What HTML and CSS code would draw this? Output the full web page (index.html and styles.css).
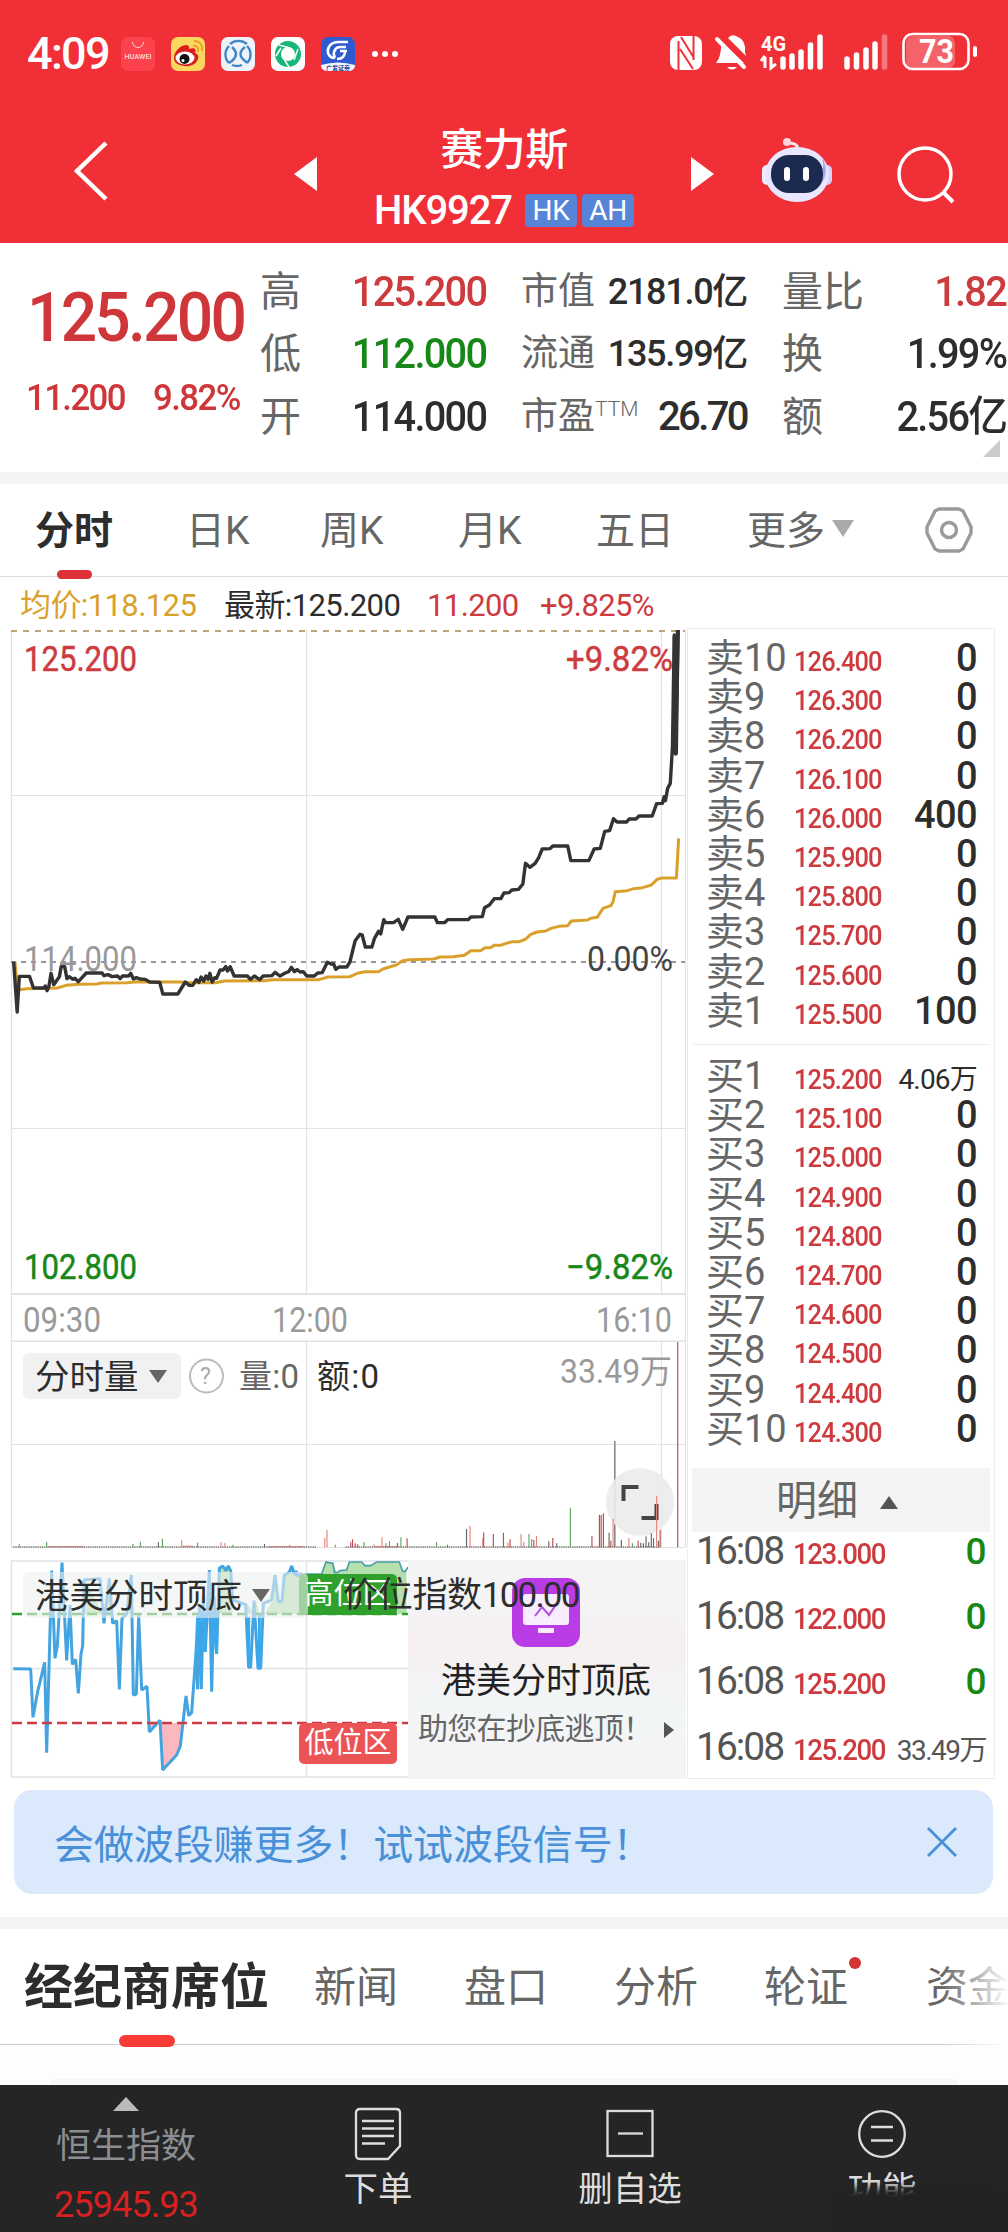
FILE: index.html
```html
<!DOCTYPE html>
<html lang="zh-CN">
<head>
<meta charset="utf-8">
<title>赛力斯 HK9927</title>
<link rel="stylesheet" href="styles.css">
</head>
<body>
<header class="top">
  <div class="status">
    <span class="clock">4:09</span>
    <div class="apps">
      <svg viewBox="0 0 34 34"><rect width="34" height="34" rx="7" fill="#fc424c"/><path d="M11.500 5a5.500 5.500 0 0 0 11 0" fill="none" stroke="#ffd0d0" stroke-width="1"/><text x="17" y="22" font-size="7" textLength="27" text-anchor="middle" fill="#fff" font-family="Roboto">HUAWEI</text></svg>
      <svg viewBox="0 0 34 34"><rect width="34" height="34" rx="7" fill="#fbd75f"/><path d="M3 21C3 14 10 8 15 8c4 0 3 3 3 4 5-2 8 0 6 4 3 1 4 3 3 6-2 6-9 8-14 7C7 28 3 26 3 21Z" fill="#d81f1e"/><ellipse cx="14" cy="21" rx="9.500" ry="6.500" fill="#fff"/><circle cx="13.500" cy="22" r="5" fill="#111"/><circle cx="12" cy="23.500" r="1.500" fill="#fff"/><path d="M22 9c4-1 6 2 5 6M23 4c6 0 9 4 8 10" fill="none" stroke="#eda02a" stroke-width="2"/></svg>
      <svg viewBox="0 0 34 34"><rect width="34" height="34" rx="7" fill="#eef3fa"/><path d="M9 7a13 13 0 0 1 17 0M8 26A12 12 0 0 1 8 9M11 10q8 7 0 14l-3 2M26 26a12 12 0 0 0 0-17M24 10q-9 7 0 14l2 2M11 28a13 13 0 0 0 10 0" fill="none" stroke="#3f86c4" stroke-width="2.400"/></svg>
      <svg viewBox="0 0 34 34"><rect width="34" height="34" rx="7" fill="#fff"/><circle cx="17" cy="17" r="10" fill="none" stroke="#16b778" stroke-width="6"/><path d="M8 8l11 3M27 12l-4 11M18 30l-7-11M5 19l5-8" stroke="#fff" stroke-width="1.500"/></svg>
      <svg viewBox="0 0 34 34"><rect width="34" height="34" rx="7" fill="#2f5bd0"/><path d="M27 5h-9C9 5 6 11 7 16c1 3 4 5 7 5M25 10h-6c-5 0-8 6-5 11M26 14h-7M24 14c0 6-3 8-8 8" fill="none" stroke="#fff" stroke-width="2.500"/><path d="M0 28q17-5 34 0c0 4-3 6-7 6H7c-4 0-7-2-7-6Z" fill="#f3f6ff"/><text x="17" y="32.500" font-size="6" text-anchor="middle" fill="#2748a0" font-family="Noto Sans CJK SC" font-weight="700">广发证券</text></svg>
      <svg class="dots" viewBox="0 0 28 8"><g fill="#fff"><circle cx="4" cy="4" r="3"/><circle cx="14" cy="4" r="3"/><circle cx="24" cy="4" r="3"/></g></svg>
    </div>
    <svg class="sys" viewBox="0 0 320 44" width="320" height="44">
      <rect x="2" y="5" width="32" height="34" rx="8" fill="#fff"/>
      <path d="M10.500 10v29M13 6l13 21M12 18l13 20M25.500 5v24" fill="none" stroke="#f12f37" stroke-width="2"/>
      <g fill="#fff">
        <path d="M53 10l23 22H48q6-7 5-22ZM60 7q4-5 10-1 8 3 7 15l1 4Z"/><path d="M59 36h10q-5 5-10 0Z"/>
        <path d="M49 8l27 28" stroke="#fff" stroke-width="4" stroke-linecap="round"/><path d="M54 6l27 28" stroke="#f12f37" stroke-width="2.500"/>
        <text x="93" y="20" font-size="21" font-weight="700" textLength="25" lengthAdjust="spacingAndGlyphs" font-family="Roboto">4G</text>
        <path d="M97 26v11M93 30l4-5M103 26v11l5-4" stroke="#fff" stroke-width="3" fill="none"/>
      </g>
      <g stroke="#fff" stroke-width="5.500" stroke-linecap="round"><path d="M115 28v8M124 25v11M133 21v15M142.500 14v22M152 6v30M179 28v8M188.500 24v12M198 19v17M207 13v23"/><path d="M216.500 6v30" opacity=".35"/></g>
      <rect x="238" y="5" width="49" height="32" rx="7" fill="#fff" opacity=".25"/>
      <rect x="235.500" y="3" width="65" height="35" rx="9" fill="none" stroke="#fff" stroke-width="2.600"/><path d="M307 17v7" stroke="#fff" stroke-width="4" stroke-linecap="round"/>
      <text x="251" y="32" font-size="33" font-weight="700" textLength="35" lengthAdjust="spacingAndGlyphs" fill="#fff" font-family="Roboto">73</text>
    </svg>
  </div>
  <nav class="nav">
    <svg class="back" viewBox="0 0 38 64"><path d="M34 4L5 32l29 28" fill="none" stroke="#fff" stroke-width="4.500"/></svg>
    <i class="prev"></i>
    <div class="title"><h1>赛力斯</h1><div class="code"><span>HK9927</span><b>HK</b><b>AH</b></div></div>
    <i class="next"></i>
    <svg class="bot" viewBox="0 0 70 66"><path d="M36 14q1-9-12-8" fill="none" stroke="#ffe3ea" stroke-width="3"/><circle cx="25" cy="5" r="4" fill="#ffd3dc"/><rect x="0" y="28" width="12" height="20" rx="5" fill="#f1ebff"/><rect x="58" y="28" width="12" height="20" rx="5" fill="#d6d0fa"/><ellipse cx="35" cy="37.500" rx="32" ry="27.500" fill="#e9e6ff"/><path d="M60 20q10 18-6 33 10-18 6-33Z" fill="#a6a4f5"/><rect x="9" y="18" width="52" height="38" rx="18" fill="#1b2a4e"/><path d="M25 33v8M44 33v8" stroke="#fff" stroke-width="6" stroke-linecap="round"/></svg>
    <svg class="search" viewBox="0 0 60 60"><circle cx="29" cy="29" r="26" fill="none" stroke="#fff" stroke-width="3.500"/><path d="M47 47l10 10" stroke="#fff" stroke-width="4"/></svg>
  </nav>
</header>

<section class="quote">
  <div class="last"><strong>125.200</strong><div><span>11.200</span><span>9.82%</span></div></div>
  <dl class="c2"><div><dt>高</dt><dd class="up">125.200</dd></div><div><dt>低</dt><dd class="down">112.000</dd></div><div><dt>开</dt><dd>114.000</dd></div></dl>
  <dl class="c3"><div><dt>市值</dt><dd>2181.0亿</dd></div><div><dt>流通</dt><dd>135.99亿</dd></div><div><dt>市盈<sup>TTM</sup></dt><dd class="pe">26.70</dd></div></dl>
  <dl class="c4"><div><dt>量比</dt><dd class="up">1.82</dd></div><div><dt>换</dt><dd>1.99%</dd></div><div><dt>额</dt><dd>2.56亿</dd></div></dl>
  <i class="corner"></i>
</section>

<nav class="periods"><b>分时</b><span>日K</span><span>周K</span><span>月K</span><span>五日</span><span>更多<i></i></span>
  <svg viewBox="0 0 48 46"><path d="M14 2h20l4 2 8 16v6l-8 16-4 2H14l-4-2-8-16v-6l8-16Z" fill="none" stroke="#9a9a9a" stroke-width="3.400" stroke-linejoin="round"/><circle cx="24" cy="23" r="7.500" fill="none" stroke="#9a9a9a" stroke-width="3.400"/></svg>
</nav>
<div class="legend"><span class="avg">均价:118.125</span><span>最新:125.200</span><span class="up">11.200</span><span class="up">+9.825%</span></div>

<main class="market">
  <div class="charts">
    <svg class="price" viewBox="8 628 680 714" width="680" height="714">
      <g stroke="#e2e2e2" stroke-width="1.200" fill="none"><path d="M11.500 630V1547M306.500 630v664M661.500 630v664M685.500 630v712M11 795.500h674M11 1128.500h674"/><path d="M11 1294h674M11 1341.500h674" stroke-width="2"/></g>
      <path d="M11 631h674" stroke="#b9a577" stroke-width="2" stroke-dasharray="6 6"/>
      <path d="M11 962h674" stroke="#777" stroke-width="1.500" stroke-dasharray="5 5"/>
      <text x="24" y="671" textLength="113" lengthAdjust="spacingAndGlyphs" class="t up">125.200</text>
      <text x="566" y="671" textLength="107" lengthAdjust="spacingAndGlyphs" class="t up">+9.82%</text>
      <text x="24" y="971" textLength="113" lengthAdjust="spacingAndGlyphs" class="t mute">114.000</text>
      <text x="587" y="971" textLength="86" lengthAdjust="spacingAndGlyphs" class="t mid">0.00%</text>
      <text x="24" y="1279" textLength="113" lengthAdjust="spacingAndGlyphs" class="t down">102.800</text>
      <text x="566" y="1279" textLength="107" lengthAdjust="spacingAndGlyphs" class="t down">−9.82%</text>
      <text x="23" y="1332" textLength="78" lengthAdjust="spacingAndGlyphs" class="t axis">09:30</text>
      <text x="272" y="1332" textLength="76" lengthAdjust="spacingAndGlyphs" class="t axis">12:00</text>
      <text x="596" y="1332" textLength="76" lengthAdjust="spacingAndGlyphs" class="t axis">16:10</text>
      <g transform="translate(0 620) scale(.4401 .33333)" fill="none" stroke-linejoin="round">
        <polyline vector-effect="non-scaling-stroke" stroke="#d9a12c" stroke-width="3" points="34,1025 40,1110 60,1106 130,1104 150,1096 180,1093 220,1092 230,1089 290,1088 310,1085 410,1086 430,1088 490,1088 510,1083 600,1082 620,1079 725,1079 745,1071 795,1070 812,1060 830,1055 860,1055 870,1047 900,1035 915,1022 930,1019 985,1017 1000,1011 1030,1010 1055,1006 1070,992 1092,992 1102,983 1115,983 1123,976 1137,976 1150,970 1165,965 1180,965 1195,957 1205,944 1220,936 1240,933 1252,925 1270,919 1290,917 1298,903 1335,900 1342,895 1357,892 1370,865 1388,857 1393,845 1398,815 1425,812 1440,806 1460,803 1480,795 1493,778 1503,774 1537,774 1542,655"/>
        <polyline vector-effect="non-scaling-stroke" stroke="#333" stroke-width="3.400" points="31,1025 39,1176 44,1069 67,1069 76,1104 100,1104 103,1098 107,1112 111,1100 116,1060 122,1094 135,1070 139,1040 147,1040 152,1076 158,1070 165,1078 170,1075 178,1085 196,1059 232,1059 236,1067 245,1064 255,1070 267,1068 273,1076 278,1068 292,1068 297,1060 303,1077 310,1073 318,1077 330,1078 340,1086 363,1087 370,1122 404,1122 421,1086 430,1096 438,1096 446,1079 452,1087 457,1071 463,1083 468,1068 473,1078 477,1060 482,1086 488,1073 492,1075 500,1050 507,1050 513,1040 517,1053 523,1040 532,1068 562,1068 569,1078 578,1068 590,1079 598,1068 618,1067 625,1057 636,1068 648,1059 656,1055 662,1042 669,1055 675,1049 682,1056 689,1055 697,1068 714,1068 722,1059 732,1058 744,1027 752,1032 758,1032 763,1048 770,1041 788,1041 795,1026 807,962 818,943 823,945 830,981 845,981 851,955 860,934 865,942 872,899 876,908 894,908 905,898 915,928 927,891 988,891 994,908 1010,908 1017,899 1064,899 1070,891 1096,890 1101,863 1112,855 1123,836 1138,836 1145,819 1157,818 1163,810 1178,808 1188,792 1194,730 1204,742 1216,730 1224,713 1232,687 1250,686 1256,678 1290,678 1297,722 1338,722 1350,687 1364,685 1374,634 1385,632 1394,596 1402,606 1424,606 1430,597 1445,597 1452,588 1482,588 1492,551 1505,550 1509,530 1512,542 1517,505 1523,490 1528,380 1532,45 1535,402 1541,30"/>
        <path vector-effect="non-scaling-stroke" d="M1533 50L1536 400L1540 30" stroke="#333" stroke-width="4"/>
      </g>
    </svg>
    <div class="volume">
      <svg viewBox="8 1342 680 206" width="680" height="206">
        <path d="M11.500 1342v205M306.500 1342v205M661.500 1342v205M685.500 1342v205M11 1444.500h674M11 1547.500h674" stroke="#e2e2e2" stroke-width="1.200"/>
        <path d="M614.800 1441v106" stroke="#888" stroke-width="1.600"/>
        <circle cx="640" cy="1502" r="34" fill="#ebebeb" opacity=".9"/>
        <path d="M623.500 1501v-14h15M656.500 1504v14h-15" fill="none" stroke="#444" stroke-width="4"/>
        <g transform="translate(0 1240) scale(.4401 .33333)" stroke-width="2.600">
          <path d="M30 921H720M785 921H1500" stroke="#777" stroke-width="4" stroke-dasharray="3 2"/><path d="M110 920H190M415 919H440M610 920H690M850 920H900" stroke="#c77" stroke-width="3"/>
          <path stroke="#e8837b" d="M44 922v-10M413 922v-22M502 922v-15M511 922v-13M658 922v-8M738 922v-28M743 922v-52M868 922v-30M850 922v-9M1068 922v-65M1097 922v-28M1154 922v-14M1184 922v-40M1190 922v-17M1219 922v-35M1393 922v-85M1429 922v-28M1492 922v-155"/>
          <path stroke="#b94c4c" d="M797 922v-15M801 922v-24M807 922v-12M813 922v-9M903 922v-13M925 922v-27M1017 922v-8M1099 922v-45M1121 922v-40M1144 922v-44M1159 922v-24M1213 922v-22M1256 922v-28M1345 922v-34M1362 922v-98M1366 922v-97M1371 922v-102M1388 922v-20M1450 922v-20M1485 922v-28M1500 922v-52M1540 922V303"/>
          <path stroke="#62a35f" d="M106 922v-17M302 922v-10M319 922v-17M369 922v-26M449 922v-14M529 922v-8M762 922v-8M827 922v-16M877 922v-13M885 922v-18M911 922v-30M992 922v-15M1202 922v-40M1208 922v-25M1296 922v-119M1437 922v-12"/>
          <path stroke="#656565" d="M360 922v-15M601 922v-10M1060 922v-55M1247 922v-18M1265 922v-12M1384 922v-44M1412 922v-22M1456 922v-14M1462 922v-12M1468 922v-33M1474 922v-15M1480 922v-42M1496 922v-20"/>
        </g>
        <circle cx="206.500" cy="1376" r="16.500" fill="none" stroke="#bbb" stroke-width="2"/><text x="200" y="1384" font-size="23" fill="#aaa" font-family="Roboto">?</text>
        <text x="239" y="1388" textLength="60" class="t v">量:0</text><text x="317" y="1388" textLength="62" class="t v dark">额:0</text>
        <text x="560" y="1383" textLength="112" lengthAdjust="spacingAndGlyphs" class="t v axis">33.49万</text>
      </svg>
      <div class="pill">分时量<i></i></div>
    </div>
    <div class="signal">
      <svg class="wave" viewBox="8 1560 400 219">
        <defs><clipPath id="hi"><rect y="0" width="1300" height="222"/></clipPath><clipPath id="lo"><rect y="549" width="1300" height="200"/></clipPath></defs>
        <path d="M11.500 1561v216M306.500 1561v216M11 1561h397M11 1668.500h397M11 1777h397" stroke="#e0e4e8" stroke-width="1.500"/>
        <g transform="translate(0 1540) scale(.33333)">
          <path clip-path="url(#hi)" fill="#b5e0ad" d="M147 222L155 92L160 222L178 222L186 68L196 222L245 222L252 120L310 222L325 115L335 222L385 222L394 105L400 222H597L606 180L612 222H620L628 90L633 222H652L660 82L690 78L698 222H737L742 190L760 222L768 180L778 222H793L820 180L825 105L835 185H848L855 105L875 78L885 105L965 102L978 66L1000 70L1010 98L1035 90L1050 66H1085L1095 77H1115L1130 66H1198L1208 94H1220V222Z"/>
          <path clip-path="url(#lo)" fill="#fbb9bf" d="M443 549L448 576L482 541L488 690Q535 650 541 615L549 549Z"/>
          <path d="M36 222H1224" stroke="#2fa02c" stroke-width="8" stroke-dasharray="30 15"/>
          <polyline fill="none" stroke="#43a4e2" stroke-width="9" stroke-linejoin="bevel" points="40,386 92,387 99,532 113,455 134,367 140,638 155,92 165,355 172,318 186,68 200,361 210,195 217,373 227,358 235,460 243,342 248,318 252,120 300,116 312,250 328,115 338,250 350,242 358,448 366,235 380,222 394,105 400,465 409,462 416,225 425,450 441,439 448,576 480,541 488,690 530,645 541,618 558,468 566,527 575,518 588,336 593,448 598,195 604,448 610,170 616,336 628,90 635,455 642,170 650,342 658,85 668,78 678,92 685,78 692,92 698,180 737,193 746,382 752,382 762,182 774,385 782,385 790,190 815,180 825,105 835,185 846,183 853,105 868,97 875,78 884,105 888,93 893,108 905,100"/>
          <path d="M588 340L593 230H615L610 336M638 230L650 340M746 230V380M778 225V384" fill="none" stroke="#35aaf3" stroke-width="9"/>
          <path d="M905 102H965L978 66L998 70L1004 98H1012L1020 92L1040 90L1048 66H1085L1095 77H1112L1130 66H1198L1208 94H1216L1224 82" fill="none" stroke="#4aa0a8" stroke-width="5"/>
          <path d="M36 549H1224" stroke="#cc3b44" stroke-width="7" stroke-dasharray="30 15"/>
        </g>
      </svg>
      <span class="zone high">高位区</span><span class="zone low">低位区</span>
      <div class="promo">
        <svg viewBox="0 0 68 69"><rect width="68" height="69" rx="13" fill="#b93ce6"/><rect x="11" y="16" width="46" height="31" rx="3" fill="#f7edff"/><rect x="26" y="50" width="16" height="5" rx="1" fill="#f7edff"/><path d="M23 38l7-9 7 8 6-9" fill="none" stroke="#b050dd" stroke-width="2"/></svg>
        <strong>港美分时顶底</strong><p>助您在抄底逃顶！</p><i></i>
      </div>
      <div class="pill sig">港美分时顶底<i></i></div>
      <div class="index">价位指数<span>100.00</span></div>
    </div>
  </div>

  <aside class="book">
    <div class="sell">
      <p><b>卖10</b><i>126.400</i><s>0</s></p><p><b>卖9</b><i>126.300</i><s>0</s></p><p><b>卖8</b><i>126.200</i><s>0</s></p><p><b>卖7</b><i>126.100</i><s>0</s></p><p><b>卖6</b><i>126.000</i><s>400</s></p><p><b>卖5</b><i>125.900</i><s>0</s></p><p><b>卖4</b><i>125.800</i><s>0</s></p><p><b>卖3</b><i>125.700</i><s>0</s></p><p><b>卖2</b><i>125.600</i><s>0</s></p><p><b>卖1</b><i>125.500</i><s>100</s></p>
    </div>
    <div class="buy">
      <p><b>买1</b><i>125.200</i><s class="wan">4.06万</s></p><p><b>买2</b><i>125.100</i><s>0</s></p><p><b>买3</b><i>125.000</i><s>0</s></p><p><b>买4</b><i>124.900</i><s>0</s></p><p><b>买5</b><i>124.800</i><s>0</s></p><p><b>买6</b><i>124.700</i><s>0</s></p><p><b>买7</b><i>124.600</i><s>0</s></p><p><b>买8</b><i>124.500</i><s>0</s></p><p><b>买9</b><i>124.400</i><s>0</s></p><p><b>买10</b><i>124.300</i><s>0</s></p>
    </div>
    <h2>明细<i></i></h2>
    <div class="ticks">
      <p><b>16:08</b><i>123.000</i><s>0</s></p><p><b>16:08</b><i>122.000</i><s>0</s></p><p><b>16:08</b><i>125.200</i><s>0</s></p><p><b>16:08</b><i>125.200</i><s class="wan">33.49万</s></p>
    </div>
  </aside>
</main>

<div class="banner"><span>会做波段赚更多！试试波段信号！</span><svg viewBox="0 0 30 30"><path d="M1 1l28 28M29 1L1 29" stroke="#4990d8" stroke-width="2.800"/></svg></div>

<nav class="sections"><b>经纪商席位</b><span>新闻</span><span>盘口</span><span>分析</span><span class="new">轮证</span><span class="fade">资金</span></nav>
<div class="sheet"><div></div></div>

<footer class="dock">
  <div class="hsi"><i></i><span>恒生指数</span><em>25945.93</em></div>
  <div><svg viewBox="0 0 48 54"><path d="M6 2h36q4 0 4 4v33L34 52H6q-4 0-4-4V6q0-4 4-4Z"/><path d="M8 14h32M8 21.500h32M8 29h32M8 36.500h23" stroke-width="2.500"/></svg><span>下单</span></div>
  <div><svg viewBox="0 0 48 54"><rect x="1.500" y="4" width="45" height="45"/><path d="M12 26.500h25"/></svg><span>删自选</span></div>
  <div class="fn"><svg viewBox="0 0 48 54"><circle cx="24" cy="27" r="22.800"/><path d="M13 20h22M13 33.500h22" stroke-width="2.500"/></svg><span>功能</span></div>
</footer>
</body>
</html>
```
FILE: styles.css
```css
* { box-sizing: border-box; margin: 0; padding: 0; }
body {
  width: 1008px; height: 2232px; overflow: hidden; background: #fff; color: #2d2d2d;
  font-family: Roboto, "Noto Sans CJK SC", sans-serif;
}
svg { display: block; flex: none; }
svg text { font-family: Roboto, "Noto Sans CJK SC", sans-serif; }
i, s, em { font-style: normal; text-decoration: none; }
b { font-weight: 400; }
.up { color: #cd3b3f; fill: #cd3b3f; }
.down { color: #178717; fill: #178717; }

.top { height: 243px; background: #f12f37; color: #fff; }
.status { display: flex; align-items: center; height: 106px; padding-left: 27px; }
.clock { width: 94px; font-size: 45px; font-weight: 500; letter-spacing: -1.7px; line-height: 50px; padding-top: 1px; }
.apps { display: flex; align-items: center; gap: 16px; width: 547px; padding-top: 2px; }
.apps svg { width: 34px; height: 34px; }
.apps .dots { width: 28px; height: 8px; }
.nav { display: flex; align-items: center; height: 137px; position: relative; padding-left: 72px; }
.nav .back { width: 38px; height: 64px; margin-bottom: 7px; }
.prev, .next { border: 17.5px solid transparent; width: 0; height: 0; margin-top: -2px; }
.prev { border-right: 23px solid #fff; border-left: 0; margin-left: 184px; }
.next { border-left: 23px solid #fff; border-right: 0; }
.title { width: 374px; text-align: center; padding-top: 11px; }
.title h1 { font-size: 43px; line-height: 60px; font-weight: 500; letter-spacing: -.5px; }
.code { display: flex; align-items: center; margin-left: 59px; height: 60px; font-size: 40px; font-weight: 500; letter-spacing: -1.1px; }
.code span { width: 150px; text-align: left; margin-left: -2px; margin-right: 1px; }
.code b { width: 52px; height: 33px; margin-right: 5px; border-radius: 4px; background: #5685d8; font-size: 28px; line-height: 33px; letter-spacing: -.3px; }
.bot { width: 70px; height: 66px; margin: -9px 0 0 48px; }
.search { width: 60px; height: 60px; margin: 0 0 0 64px; }

.quote { position: relative; display: flex; height: 241px; padding-top: 17.5px; border-bottom: 12px solid #f4f4f4; }
.last { width: 262px; padding: 26px 0 0 27px; color: #cf3639; font-weight: 500; }
.last strong { display: block; font-size: 69px; line-height: 62px; font-weight: 500; letter-spacing: -3px; transform: scaleX(.93); transform-origin: left; }
.last div { display: flex; gap: 30px; margin-top: 28px; font-size: 37px; line-height: 42px; letter-spacing: -1.7px; transform: scaleX(.94); transform-origin: left; margin-left: -1px; }
.quote dl { width: 224px; margin-right: 37px; flex: none; }
.quote dl div { display: flex; justify-content: space-between; height: 62.5px; line-height: 62.5px; white-space: nowrap; }
.quote dt { color: #666; font-size: 41px; margin-left: -2px; }
.quote dd { font-size: 42px; font-weight: 500; letter-spacing: -1.8px; transform: scaleX(.945); transform-origin: right; }
.quote .c3 dt { font-size: 37px; }
.quote .c3 dd { font-size: 36px; letter-spacing: -1.3px; transform: none; }
.quote .c3 .pe { font-size: 40px; letter-spacing: -2.6px; }
.quote .c4 { width: 222px; margin-right: 0; }
.quote sup { font-size: 21px; vertical-align: 13px; line-height: 0; font-weight: 300; }
.corner { position: absolute; right: 8px; bottom: 15px; border-left: 17px solid transparent; border-bottom: 17px solid #ccc; }

.periods { display: grid; grid-template-columns: 151px 134px 138px 138px 151px 178px 1fr; height: 93px; padding-left: 35px; border-bottom: 1.5px solid #dedede; font-size: 39px; line-height: 95px; color: #666; }
.periods b { position: relative; font-weight: 700; color: #2d2d2d; }
.periods b::after { content: ""; position: absolute; left: 22px; bottom: 0; width: 35px; height: 9px; border-radius: 5px; background: #dc3237; }
.periods i { display: inline-block; border: 11px solid transparent; border-top: 17px solid #aaa; border-bottom: 0; margin: 0 0 7px 7px; }
.periods svg { width: 48px; height: 46px; margin-top: 23px; }
.legend { display: grid; grid-template-columns: 204px 203px 113px 1fr; height: 51px; padding: 4px 0 0 20px; font-size: 31px; line-height: 50px; letter-spacing: -.6px; white-space: nowrap; }
.avg { color: #d9a12c; }

.market { display: flex; height: 1151px; }
.charts { width: 687px; flex: none; padding-left: 8px; }
.t { font-size: 35px; }
.mute { fill: #999; }
.mid { fill: #444; }
.axis { fill: #999; }
.t.up, .t.down { stroke-width: .5px; }
.t.up { stroke: #cd3b3f; }
.t.down { stroke: #178717; }
.t.v { font-size: 33px; }
.v { fill: #666; }
.v.axis { fill: #999; }
.dark { fill: #2d2d2d; }
.volume { position: relative; height: 206px; }
.pill { position: absolute; left: 15px; top: 11px; width: 158px; height: 46px; border-radius: 6px; background: rgba(240,240,240,.95); padding-left: 12px; font-size: 34.5px; line-height: 49px; white-space: nowrap; }
.pill i { display: inline-block; border: 9px solid transparent; border-top: 13px solid #666; border-bottom: 0; margin: 0 0 6px 10px; }
.signal { position: relative; display: flex; height: 219px; margin-top: 12px; }
.wave { width: 400px; height: 219px; }
.zone { position: absolute; left: 291px; width: 98px; height: 41px; border-radius: 5px; color: #fff; font-size: 29px; line-height: 40px; text-align: center; }
.high { top: 14px; background: #2fa02c; }
.low { top: 163px; background: #ea5455; }
.promo { position: relative; width: 278px; flex: none; background: linear-gradient(#f4f4f5 20%, #f6eff1 38%, #f2f6f7 70%, #f4f4f6 85%); }
.promo svg { width: 68px; height: 69px; margin: 18px 0 0 104px; }
.promo strong { display: block; padding-left: 33px; font-size: 35px; font-weight: 400; line-height: 48px; margin-top: 11px; color: #222; }
.promo p { padding-left: 10px; font-size: 30px; letter-spacing: -.7px; line-height: 44px; margin-top: 1px; color: #666; }
.promo i { position: absolute; right: 12px; top: 162px; border: 8px solid transparent; border-left: 10px solid #555; border-right: 0; }
.sig { top: 12px; width: 285px; background: rgba(238,240,240,.6); }
.index { position: absolute; left: 335px; top: 13px; font-size: 35px; line-height: 46px; letter-spacing: -.3px; white-space: nowrap; }
.index span { letter-spacing: -1.8px; }

.book { width: 308px; flex: none; border: 1.5px solid #ececec; }
.book p { display: flex; position: relative; padding: 0 17px 0 18px; height: 39.2px; line-height: 39.2px; }
.book b { width: 88px; font-size: 38px; color: #666; white-space: nowrap; align-self: baseline; }
.book i { flex: 1; font-size: 27px; color: #cd3b3f; letter-spacing: -.9px; align-self: baseline; font-weight: 500; transform: scaleX(.94); transform-origin: left; }
.book s { font-size: 38px; align-self: baseline; font-weight: 500; letter-spacing: -.6px; }
.book .wan { font-size: 28px; font-weight: 400; letter-spacing: -.8px; }
.sell { height: 415px; padding-top: 10px; }
.buy { height: 424px; margin: 0 4px; border-top: 1.5px solid #eee; padding-top: 12px; }
.buy p { margin: 0 -4px; }
.book h2 { height: 64px; margin: 0 4px; background: #f4f4f4; font-size: 41px; line-height: 66px; font-weight: 400; color: #666; padding-left: 84px; }
.book h2 i { display: inline-block; border: 9.5px solid transparent; border-bottom: 13px solid #555; border-top: 0; margin: 0 0 6px 22px; transform: none; }
.ticks p { height: 65.2px; line-height: 38px; padding: 0 8px; }
.ticks b { width: 97px; font-size: 39px; color: #555; letter-spacing: -2px; }
.ticks i { font-size: 30px; letter-spacing: -1.5px; transform: scaleX(.92); }
.ticks s { font-size: 37px; color: #178717; }
.ticks .wan { color: #555; font-size: 28px; letter-spacing: -1.5px; }

.banner { display: flex; justify-content: space-between; align-items: center; height: 104px; margin: 11px 15px 23px 14px; padding: 0 36px 0 40px; border-radius: 18px; background: #dae9fb; color: #4990d8; font-size: 40px; letter-spacing: -.1px; white-space: nowrap; }
.banner svg { width: 30px; height: 30px; }
.sections { display: grid; grid-template-columns: 290px 150px 150px 150px 162px 1fr; height: 128px; padding-left: 24px; border-top: 12px solid #f4f4f4; border-bottom: 1.5px solid #ccc; font-size: 42px; line-height: 118px; color: #666; white-space: nowrap; }
.sections span, .sections b { position: relative; }
.sections b { font-size: 49px; font-weight: 700; color: #2d2d2d; }
.sections b::after { content: ""; position: absolute; left: 95px; bottom: 0; width: 56px; height: 12px; border-radius: 6px; background: #f63c35; }
.new::after { content: ""; position: absolute; left: 85px; top: 28px; width: 12px; height: 12px; border-radius: 50%; background: #d43434; }
.fade::after { content: ""; position: absolute; inset: 0 0 0 15px; background: linear-gradient(90deg, transparent, #fff); }
.sheet { height: 40px; padding: 34px 49px 0; background: #fdfdfd; }
.sheet div { height: 6px; background: #f7f7f7; border-radius: 6px 6px 0 0; }

.dock { display: grid; grid-template-columns: repeat(4, 252px); height: 147px; background: #252525; color: #ddd; }
.dock div { position: relative; display: flex; flex-direction: column; align-items: center; padding-top: 22px; }
.dock svg { width: 48px; height: 54px; fill: none; stroke: #ddd; stroke-width: 2.3; }
.dock span { font-size: 34.5px; line-height: 44px; margin-top: 6px; }
.dock .hsi { padding-top: 12px; }
.hsi i { border: 13px solid transparent; border-bottom: 14px solid #bbb; border-top: 0; }
.dock .hsi span { margin-top: 14px; font-size: 35px; color: #8b8f94; }
.hsi em { margin-top: 14px; font-size: 36px; line-height: 44px; letter-spacing: -.9px; color: #d92020; }
.fn::after { content: ""; position: absolute; left: 76px; top: 103px; right: 0; bottom: 0; background: #222; filter: blur(4px); }
```
